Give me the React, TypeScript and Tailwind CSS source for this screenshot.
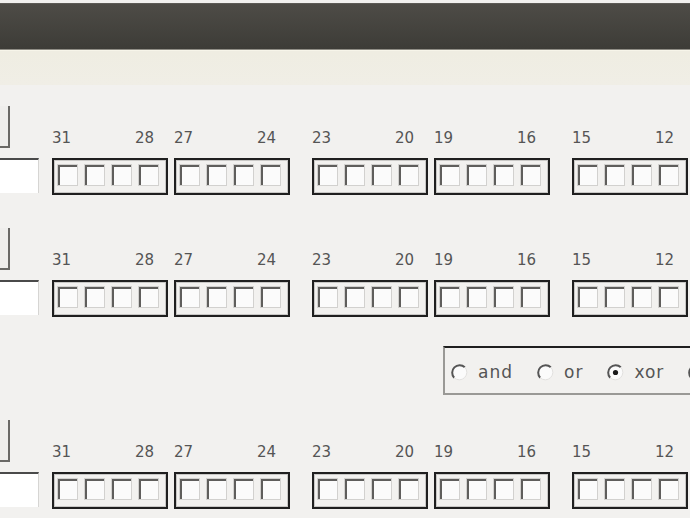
import React from "react";

const font = { fontFamily: '"DejaVu Sans", "Liberation Sans", sans-serif' };

// only the nibbles that fit in the window are drawn
const bytes: [number, number][][] = [
  [
    [31, 28],
    [27, 24],
  ],
  [
    [23, 20],
    [19, 16],
  ],
  [[15, 12]],
];

function Checkbox() {
  return (
    <div className="h-[22px] w-[21px] border border-[#d2d1cf] bg-white">
      <div className="h-full w-full border-l-2 border-t-2 border-[#5f5e5c] bg-[#fbfbfb]" />
    </div>
  );
}

function Nibble({ hi, lo }: { hi: number; lo: number }) {
  return (
    <div className="flex w-[116px] shrink-0 flex-col">
      <div className="flex h-[20px] items-start justify-between pr-[14px] text-[15px] leading-[15px] text-[#555555]">
        <span>{hi}</span>
        <span>{lo}</span>
      </div>
      <div className="mt-[7px] h-[37px] border-2 border-[#1f1f1f]">
        <div className="flex h-full gap-[6px] border border-[#c9c8c6] pl-[2px] pt-[3px]">
          <Checkbox />
          <Checkbox />
          <Checkbox />
          <Checkbox />
        </div>
      </div>
    </div>
  );
}

function BitRow() {
  return (
    <div className="flex items-start gap-[12px]">
      <div className="flex w-[40px] shrink-0 flex-col">
        <div className="h-[42px] w-[10px] border-b-2 border-r-2 border-[#6a6966] bg-[#efeeec]" />
        <div className="mt-[10px] h-[35px] w-[39px] border-r border-t-2 border-[#d6d5d3] border-t-[#4a4a4a] bg-white" />
      </div>
      <div className="flex gap-[22px] pt-[25px]">
        {bytes.map((b, i) => (
          <div key={i} className="flex gap-[6px]">
            {b.map(([hi, lo]) => (
              <Nibble key={hi} hi={hi} lo={lo} />
            ))}
          </div>
        ))}
      </div>
    </div>
  );
}

function Radio({ checked }: { checked?: boolean }) {
  return (
    <svg width="17" height="17" viewBox="0 0 17 17" className="shrink-0">
      <circle cx="8.5" cy="8.5" r="7.5" fill="#fbfbfb" />
      <path d="M3.2 13.8 A7.5 7.5 0 0 1 13.8 3.2" fill="none" stroke="#555" strokeWidth="2" />
      <path d="M13.8 3.2 A7.5 7.5 0 0 1 3.2 13.8" fill="none" stroke="#e2e1df" strokeWidth="1" />
      {checked && <circle cx="8.5" cy="8.5" r="2.6" fill="#1a1a1a" />}
    </svg>
  );
}

export default function App() {
  const ops = [
    { label: "and" },
    { label: "or" },
    { label: "xor", checked: true },
  ];

  return (
    <div
      style={font}
      className="h-[518px] w-[690px] overflow-hidden bg-[#f2f1ef]"
    >
      <div className="h-[47px] border-b border-[#8f8d85] bg-gradient-to-b from-[#4e4c47] to-[#3d3c37]">
        <div className="mt-[3px] h-px bg-[#5d5b56]" />
      </div>
      <div className="h-[35px] border-t border-[#f7f5ea] bg-gradient-to-b from-[#efede2] to-[#f0eee6]" />

      <div className="pt-[21px]">
        <BitRow />
        <div className="mt-[33px]">
          <BitRow />
        </div>

        <div className="ml-[443px] mt-[29px] flex h-[49px] w-[270px] items-center gap-[24px] border-b-2 border-l-2 border-t-2 border-[#9a9996] border-t-[#1f1f1f] pl-[6px] pt-[3px]">
          {ops.map((o) => (
            <div key={o.label} className="flex items-center gap-[10px]">
              <Radio checked={o.checked} />
              <span className="text-[17px] leading-none tracking-[1px] text-[#555555]">
                {o.label}
              </span>
            </div>
          ))}
          <Radio />
        </div>

        <div className="mt-[25px]">
          <BitRow />
        </div>
      </div>
    </div>
  );
}
